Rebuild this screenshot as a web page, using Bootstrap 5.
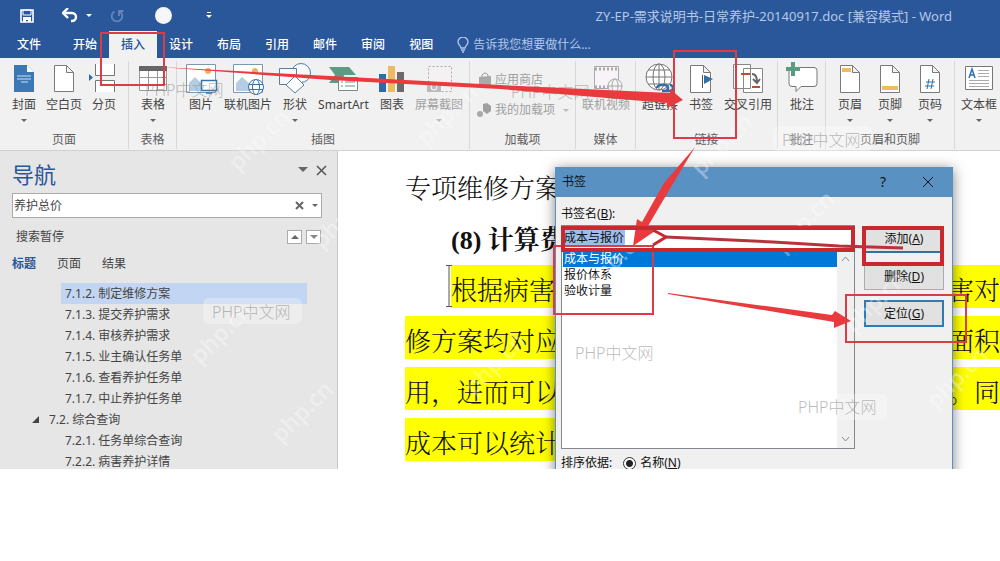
<!DOCTYPE html>
<html lang="zh-CN">
<head>
<meta charset="utf-8">
<meta name="viewport" content="width=device-width, initial-scale=1">
<title>ZY-EP-需求说明书-日常养护-20140917.doc - Word</title>
<link rel="stylesheet" href="https://cdn.jsdelivr.net/npm/bootstrap@5.3.0/dist/css/bootstrap.min.css">
<style>
body{font:12px/18px "Noto Sans","Noto Sans CJK SC",sans-serif;color:#444;background:#fff}
button,input{font:inherit;color:inherit}
button{border:0;background:none;padding:0}
svg{display:block;flex:none}
.app{overflow:hidden}
.titlebar{background:#2a579a;height:31px;padding:0 48px 0 19px;color:#b4c8e8}
.titlebar button{display:flex;justify-content:center;flex:none}
.doc-name{font-size:13px}
.w-save{width:16px}.w-undo{width:40px;margin-left:22px}.w-redo{width:40px}.w-touch{width:52px}.w-more{width:40px}
.tabs{background:#2a579a;height:27px;color:#fff}
.tabs .nav-link{padding:5px 12px 4px;color:#fff;border-radius:0;font-weight:500}
.tabs .nav-link.active{background:#f1f1f1;color:#2a579a}
.tabs .file-tab{padding-left:17px;padding-right:20px}
.tell{color:#b4c8e8;padding-left:12px}
.ribbon{background:#f1f1f1;border-bottom:1px solid #d2d2d2;height:93px;padding-top:3px}
.rgroup{display:flex;flex-direction:column;flex:none;border-right:1px solid #d8d8d8;height:88px}
.rgroup:last-child{border-right:0;flex:1 0 auto}
.items{display:flex;gap:11px;padding:0 6px 0 12px;height:71px}
.near .items{padding-left:6px;padding-right:5px}
.mid .items{padding:0 12px;gap:10px}
.wide .items{gap:16px;padding-right:12px}
.cmd{display:flex;flex-direction:column;align-items:center;white-space:nowrap;color:#444;position:relative}
.cmd svg.ico{width:30px;height:32px;margin:1px -8px 2px;overflow:visible}
.cmd.off,.addin{color:#a0a0a0}
.caret{width:0;height:0;border:3px solid transparent;border-top-color:#666;border-bottom:0;flex:none}
.cmd .caret{margin-top:5px}
.off .caret{border-top-color:#bbb}
.gname{text-align:center;color:#5c5c5c;line-height:18px}
.addin{display:flex;align-items:center;gap:4px;height:30px;white-space:nowrap}
.work{height:318px;position:relative;background:#fff}
.pane{width:338px;flex:none;background:#e6e6e6;border-right:1px solid #c8c8c8;overflow:hidden}
.pane h1{font-size:22px;line-height:28px;color:#2a579a;margin:0;font-weight:400}
.head{padding:9px 10px 5px 12px;height:42px}
.search{margin:0 15px 0 12px;height:25px;border:1px solid #ababab;background:#fff;padding:0 3px 0 1px}
.search input{border:0;background:none;padding:0;outline:0;min-width:0}
.state{height:37px;padding:0 16px}
.state button{width:15px;height:14px;border:1px solid #ababab;background:#fff;display:flex;align-items:center;justify-content:center}
.state button:last-child{margin-right:-7px}
.views{padding:0 12px;height:18px;gap:21px}
.views a{color:#444;text-decoration:none}
.views a.active{color:#2a579a;font-weight:700}
.tree{margin:10px 30px 0 0;padding:0;list-style:none}
.tree li{height:21px;line-height:21px}
.tree a{display:block;color:#444;text-decoration:none;margin-left:61px;padding-left:4px}
.tree a.current{background:#c2d5f2}
.tree a.parent{margin-left:31px;padding-left:0;display:flex;align-items:center;gap:9px}
.page{min-width:0;padding:12px 0 0 67px;font:26px/54px "Liberation Serif","Noto Serif CJK SC","Noto Sans CJK SC",serif;color:#111;font-weight:300;overflow:hidden}
.ln{display:flex;justify-content:space-between;white-space:nowrap;height:43px;margin-bottom:8px}
.ln.ind{margin-left:46px}
.hl{background:#ff0}
.ln.h{font-weight:700}
.fin{margin-right:35%}
.cursor{width:6px;height:42px;position:absolute;left:-5px;top:0}
.clipbox{position:absolute;inset:0;overflow:hidden}
.dlg{position:absolute;left:555px;top:16px;width:398px;height:340px;background:#f0f0f0;box-shadow:0 2px 12px rgba(0,0,0,.5);border:1px solid #5a91c3;border-top:0;color:#111}
.dlg header{background:#5a91c3;height:30px;padding:0 18px 0 6px}
.dlg .cols{padding:8px 8px 0 5px;gap:9px}
.dlg label.cap{display:block;padding-bottom:2px}
.namebox{height:25px;border:1px solid #888;border-radius:0;padding:0 2px 2px;width:100%;background:linear-gradient(#9ebcec,#9ebcec) 2px 2px/61px 17px no-repeat #fff;outline:0}
.listbox{height:199px;border:1px solid #828790;border-top:0;background:#fff}
.listbox ul{list-style:none;margin:0;padding:1px 0 0 1px}
.listbox li{height:16px;line-height:16px;padding-left:1px}
.listbox li.sel{background:#0078d7;color:#fff}
.sbar{width:17px;background:#f0f0f0;padding:6px 4px}
.acts{width:80px;padding-top:21px}
.acts button{height:27px;border:1px solid #adadad;background:#e1e1e1;width:100%;margin-bottom:10px}
.acts button.def{border:2px solid #2f7cb5}
.acts button.first{border:0;border-bottom:2px solid #35709a}
.sort{padding:5px 5px;gap:9px}
.sort input{width:13px;height:13px;margin:0 4px 0 2px;appearance:none;border:1px solid #333;border-radius:50%;background:radial-gradient(#222 0 3px,#fff 4px)}
.marks{position:absolute;left:0;top:0;pointer-events:none}
.wm{font:16px "Noto Sans","Noto Sans CJK SC",sans-serif;font-weight:300;fill:#8c8c8c;fill-opacity:.6}
.wd{font:600 23px "Open Sans",sans-serif;fill:#fff;fill-opacity:.34}
</style>
</head>
<body>
<div class="app position-relative">
<header class="titlebar d-flex align-items-center">
  <button class="w-save" aria-label="保存"><svg width="14" height="14" viewBox="0 0 14 14"><path d="M1 1h12v12H1z" fill="none" stroke="#fff" stroke-width="1.6"/><path d="M3 1h8v5H3z" fill="none" stroke="#fff"/><path d="M3 8h8v5H8v-2H6v2H3z" fill="#fff"/></svg></button>
  <button class="w-undo align-items-center gap-2" aria-label="撤消"><svg width="16" height="15" viewBox="0 0 16 15"><path d="M3 5h7a4 4 0 0 1 0 8H9" fill="none" stroke="#fff" stroke-width="2.4"/><path d="M6 0L1 5l5 5" fill="none" stroke="#fff" stroke-width="2.4"/></svg><i class="caret" style="border-top-color:#fff"></i></button>
  <button class="w-redo" aria-label="恢复"><svg width="14" height="14" viewBox="0 0 14 14"><path d="M4.500 2.500A5.300 5.300 0 1 0 9.500 2.500M9 7V2h4.500" fill="none" stroke="#6486bd" stroke-width="1.800"/></svg></button>
  <button class="w-touch" aria-label="录制"><svg width="17" height="17"><circle cx="8.500" cy="8.500" r="8.500" fill="#f4f6fa"/></svg></button>
  <button class="w-more" aria-label="自定义"><svg width="6" height="7"><path d="M1 .5h4" stroke="#fff"/><path d="M0 3h6L3 6z" fill="#fff"/></svg></button>
  <div class="doc-name ms-auto text-nowrap">ZY-EP-需求说明书-日常养护-20140917.doc [兼容模式] - Word</div>
</header>
<nav class="tabs nav flex-nowrap text-nowrap">
  <a class="nav-link file-tab" href="#">文件</a><a class="nav-link" href="#">开始</a><a class="nav-link active" href="#">插入</a><a class="nav-link" href="#">设计</a><a class="nav-link" href="#">布局</a><a class="nav-link" href="#">引用</a><a class="nav-link" href="#">邮件</a><a class="nav-link" href="#">审阅</a><a class="nav-link" href="#">视图</a>
  <div class="tell d-flex align-items-center gap-1"><svg width="12" height="16" viewBox="0 0 12 16"><path d="M4 11c0-2-3-3-3-6a5 5 0 0 1 10 0c0 3-3 4-3 6zM4 13h4M5 15h2" fill="none" stroke="#b4c8e8" stroke-width="1.300"/></svg>告诉我您想要做什么...</div>
</nav>
<section class="ribbon d-flex">
  <div class="rgroup mid"><div class="items">
    <button class="cmd"><svg class="ico" viewBox="0 0 30 32"><path d="M5 3h13l7 7v20H5z" fill="#3b78b5"/><path d="M18 3v7h7" fill="#fff"/><path d="M8 14h14M8 17h14M12 20h7" stroke="#cfe0f2"/></svg>封面<i class="caret"></i></button>
    <button class="cmd"><svg class="ico" viewBox="0 0 30 32"><path d="M5.500 3.500h12l7 7v19h-19zM17.500 3.500v7h7" fill="#fff" stroke="#7a7a7a"/></svg>空白页</button>
    <button class="cmd"><svg class="ico" viewBox="0 0 30 32"><path d="M6 2v11h20V2M6 30V18h20v12" fill="#fff"/><path d="M6.500 2v11.500h19V2M6.500 30V18.500h19V30" fill="none" stroke="#777"/><path d="M0 12l4 3.500L0 19z" fill="#2f6ea8"/></svg>分页</button>
  </div><div class="gname">页面</div></div>
  <div class="rgroup mid"><div class="items" style="padding-right:11px">
    <button class="cmd"><svg class="ico" viewBox="0 0 30 32"><path d="M1.500 4.500h27v24h-27z" fill="#fff" stroke="#999"/><path d="M1 4h28v5H1z" fill="#666"/><path d="M1 15.500h28M1 22.500h28M10.500 9v20M19.500 9v20" stroke="#999"/></svg>表格<i class="caret"></i></button>
  </div><div class="gname">表格</div></div>
  <div class="rgroup"><div class="items">
    <button class="cmd"><svg class="ico" viewBox="0 0 30 32"><path d="M.5 2.500h29v28H.5z" fill="#fff" stroke="#7f97aa"/><circle cx="22" cy="9" r="3" fill="#eab363"/><path d="M3 29V21l6-6 6 6v8z" fill="#b5cce4"/><path d="M15.500 18.500h15v10h-15zM20 31h6" fill="#fff" stroke="#3475ae" stroke-width="1.500"/></svg>图片</button>
    <button class="cmd"><svg class="ico" viewBox="0 0 30 32"><path d="M.5 2.500h29v28H.5z" fill="#fff" stroke="#7f97aa"/><circle cx="22" cy="9" r="3" fill="#eab363"/><path d="M3 29V21l6-6 8 7v7z" fill="#b5cce4"/><g fill="#fff" stroke="#3475ae"><circle cx="23" cy="25" r="7.500"/><ellipse cx="23" cy="25" rx="3.500" ry="7.500"/><path d="M16 22.500h14M16 27.500h14"/></g></svg>联机图片</button>
    <button class="cmd"><svg class="ico" viewBox="0 0 30 32"><circle cx="21" cy="11" r="9.500" fill="#f6f8fa" stroke="#4980b2"/><path d="M-.5 6.500h17v16h-17z" fill="#f6f8fa" stroke="#5a7e9d"/><path d="M15 14l9 9-9 8-9-8z" fill="#fff" stroke="#5a7e9d"/></svg>形状<i class="caret"></i></button>
    <button class="cmd"><svg class="ico" viewBox="0 0 30 32"><path d="M0 5h20l7 8H15l-2 8H0l6-8z" fill="#5a9c86"/><path d="M9.500 15.500h19v13h-19z" fill="#fff" stroke="#7a8a85"/><path d="M12 20h2m2 0h10M12 24h2m2 0h10" stroke="#7a8a85"/></svg>SmartArt</button>
    <button class="cmd"><svg class="ico" viewBox="0 0 30 32"><path d="M2 12h7v18H2z" fill="#2f6ba8"/><path d="M11 4h7v26h-7z" fill="#edbb62"/><path d="M20 10h7v20h-7z" fill="#6b6b6b"/></svg>图表</button>
    <button class="cmd off"><svg class="ico" viewBox="0 0 30 32"><path d="M4.500 4.500h23v25h-23z" fill="#f5f1f3" stroke="#aaa" stroke-dasharray="2 2"/><path d="M3 20h14v10H3z" fill="#bbb"/><circle cx="10" cy="25" r="3" fill="#bbb" stroke="#fff"/></svg>屏幕截图<i class="caret"></i></button>
  </div><div class="gname">插图</div></div>
  <div class="rgroup"><div class="items flex-column gap-0 pt-1" style="padding:0 6px 0 7px">
    <button class="addin"><svg width="14" height="16" viewBox="0 0 14 16"><path d="M2 5l12-1v11H2z" fill="#a9a9a9"/><path d="M5 6V3q3-4 6 0v2" fill="none" stroke="#999"/></svg>应用商店</button>
    <button class="addin"><svg width="14" height="16" viewBox="0 0 14 16"><path d="M6 2l4-1 4 3v5l-4 3-4-3z" fill="#a0a0a0"/><circle cx="3" cy="12" r="3" fill="#a9a9a9"/></svg>我的加载项<i class="caret ms-1" style="border-top-color:#bbb"></i></button>
  </div><div class="gname">加载项</div></div>
  <div class="rgroup near"><div class="items">
    <button class="cmd off"><svg class="ico" viewBox="0 0 30 32"><path d="M3.500 4.500h24v22h-24z" fill="#f7f3f6" stroke="#aaa"/><path d="M4 7h24M4 25h14" stroke="#aaa" stroke-width="3" stroke-dasharray="2 2"/><g fill="#f4f4f4" stroke="#aaa"><circle cx="24" cy="24" r="7"/><ellipse cx="24" cy="24" rx="3" ry="7"/><path d="M17 24h14"/></g></svg>联机视频</button>
  </div><div class="gname">媒体</div></div>
  <div class="rgroup near"><div class="items">
    <button class="cmd"><svg class="ico" viewBox="0 0 30 32"><g fill="#fff" stroke="#777"><circle cx="14" cy="15" r="13"/><ellipse cx="14" cy="15" rx="6" ry="13"/><path d="M14 2v26M1 15h26M3 8h22M3 22h22" fill="none"/></g><path d="M12 26a4 3 0 0 1 4-3h4a3 3 0 0 1 0 6M17 29h8a3 3 0 0 0 0-6" fill="none" stroke="#2f6ea8" stroke-width="2.500"/></svg>超链接</button>
    <button class="cmd"><svg class="ico" viewBox="0 0 30 32"><path d="M4.500 3.500h13l7 7v20h-20zM17.500 3.500v7h7" fill="#fff" stroke="#7a7a7a"/><path d="M16.500 13v13" stroke="#555"/><path d="M18 13l9 4-9 5z" fill="#2f6ea8"/></svg>书签</button>
    <button class="cmd"><svg class="ico" viewBox="0 0 30 32"><path d="M10.500 6.500h19v24h-19zM.5 2.500h17v24H.5z" fill="#fff" stroke="#888"/><path d="M8 12h9M19 25h8" stroke="#b94f30" stroke-width="2"/><path d="M19 12q5 0 5 8M20 17l4 4 3-4" fill="none" stroke="#666" stroke-width="2"/></svg>交叉引用</button>
  </div><div class="gname">链接</div></div>
  <div class="rgroup mid"><div class="items" style="padding-right:11px">
    <button class="cmd"><svg class="ico" viewBox="0 0 30 32"><path d="M2 5.500h25q3 0 3 3v13q0 3-3 3H14l-5 5v-5H5q-3 0-3-3z" fill="#fff" stroke="#777"/><path d="M6 0v14M-1 7h14" stroke="#5a9c80" stroke-width="4"/></svg>批注</button>
  </div><div class="gname">批注</div></div>
  <div class="rgroup wide"><div class="items">
    <button class="cmd"><svg class="ico" viewBox="0 0 30 32"><path d="M5.500 3.500h12l7 7v20h-19zM17.500 3.500v7h7" fill="#fff" stroke="#7a7a7a"/><path d="M7 6h9v4H7z" fill="#edbb62"/></svg>页眉<i class="caret"></i></button>
    <button class="cmd"><svg class="ico" viewBox="0 0 30 32"><path d="M5.500 3.500h12l7 7v20h-19zM17.500 3.500v7h7" fill="#fff" stroke="#7a7a7a"/><path d="M7 24h16v4H7z" fill="#edbb62"/></svg>页脚<i class="caret"></i></button>
    <button class="cmd"><svg class="ico" viewBox="0 0 30 32"><path d="M5.500 3.500h12l7 7v20h-19zM17.500 3.500v7h7" fill="#fff" stroke="#7a7a7a"/><path d="M14 17l-2 10M18 17l-2 10M11 20h9M10 24h9" stroke="#2f6ea8"/></svg>页码<i class="caret"></i></button>
  </div><div class="gname">页眉和页脚</div></div>
  <div class="rgroup near"><div class="items">
    <button class="cmd"><svg class="ico" viewBox="0 0 30 32"><path d="M1.500 4.500h27v23h-27z" fill="#fff" stroke="#777"/><path d="M5 16l3-9 3 9M6 13h4" fill="none" stroke="#2f6ea8" stroke-width="1.500"/><path d="M14 8.500h11M14 11.500h11M14 14.500h11M5 18.500h20M5 21.500h20M5 24.500h20" stroke="#aaa"/></svg>文本框<i class="caret"></i></button>
  </div></div>
</section>
<main class="work d-flex">
  <aside class="pane">
    <div class="head d-flex justify-content-between"><h1>导航</h1>
      <div class="d-flex align-items-center gap-2 pb-2"><svg width="10" height="6"><path d="M0 0h10L5 5z" fill="#666"/></svg><button aria-label="关闭"><svg width="11" height="11"><path d="M1 1l9 9M10 1l-9 9" stroke="#555" stroke-width="1.500"/></svg></button></div></div>
    <div class="search d-flex align-items-center"><input class="flex-grow-1 ps-0" aria-label="搜索文档" value="养护总价"><svg class="me-2" width="9" height="9"><path d="M1 1l7 7M8 1L1 8" stroke="#666" stroke-width="2"/></svg><i class="caret"></i></div>
    <div class="state d-flex align-items-center"><span class="me-auto">搜索暂停</span><button class="me-1" aria-label="上一个"><svg width="8" height="4"><path d="M0 4h8L4 0z" fill="#666"/></svg></button><button class="me-0" aria-label="下一个"><svg width="8" height="4"><path d="M0 0h8L4 4z" fill="#888"/></svg></button></div>
    <nav class="views d-flex"><a class="active" href="#">标题</a><a href="#">页面</a><a href="#">结果</a></nav>
    <ul class="tree">
      <li><a class="current" href="#">7.1.2. 制定维修方案</a></li>
      <li><a href="#">7.1.3. 提交养护需求</a></li>
      <li><a href="#">7.1.4. 审核养护需求</a></li>
      <li><a href="#">7.1.5. 业主确认任务单</a></li>
      <li><a href="#">7.1.6. 查看养护任务单</a></li>
      <li><a href="#">7.1.7. 中止养护任务单</a></li>
      <li><a class="parent" href="#"><svg width="9" height="8"><path d="M8 0v7H1z" fill="#444"/></svg>7.2. 综合查询</a></li>
      <li><a href="#">7.2.1. 任务单综合查询</a></li>
      <li><a href="#">7.2.2. 病害养护详情</a></li>
    </ul>
  </aside>
  <article class="page flex-grow-1">
    <div class="ln">专项维修方案</div>
    <div class="ln ind h">(8) 计算费</div>
    <div class="ln ind hl position-relative"><svg class="cursor" viewBox="0 0 6 42"><path d="M0 .5h6M3 0v42M0 41.500h6" stroke="#555"/></svg><span>根据病害</span><span>害对</span></div>
    <div class="ln hl"><span>修方案均对应</span><span>面积</span></div>
    <div class="ln hl"><span>用，进而可以</span><span>。同</span></div>
    <div class="ln hl fin">成本可以统计</div>
  </article>
  <div class="clipbox"><section class="dlg" role="dialog" aria-label="书签">
    <header class="d-flex align-items-center"><span class="me-auto">书签</span><button class="me-4 pe-2" style="font-size:14px">?</button><button class="ms-1" aria-label="关闭"><svg width="12" height="12"><path d="M1 1l10 10M11 1L1 11" stroke="#111"/></svg></button></header>
    <div class="cols d-flex">
      <div class="flex-grow-1">
        <label class="cap" for="bm">书签名(<u>B</u>):</label>
        <input class="namebox" id="bm" value="成本与报价">
        <div class="listbox d-flex">
          <ul class="flex-grow-1" role="listbox"><li class="sel" role="option">成本与报价</li><li role="option">报价体系</li><li role="option">验收计量</li></ul>
          <div class="sbar d-flex flex-column justify-content-between"><svg width="9" height="6"><path d="M1 5l3.500-4L8 5" fill="none" stroke="#888"/></svg><svg width="9" height="6"><path d="M1 1l3.500 4L8 1" fill="none" stroke="#888"/></svg></div>
        </div>
      </div>
      <div class="acts"><button class="first">添加(<u>A</u>)</button><button>删除(<u>D</u>)</button><button class="def">定位(<u>G</u>)</button></div>
    </div>
    <div class="sort d-flex align-items-center"><span>排序依据:</span><label class="d-flex align-items-center"><input type="radio" name="s" checked>名称(<u>N</u>)</label></div>
  </section></div>
</main>
<svg class="marks" width="1000" height="469" viewBox="0 0 1000 469">
  <g fill="#fff" fill-opacity=".28"><rect x="203" y="298" width="99" height="26" rx="6"/><rect x="788" y="394" width="99" height="26" rx="6"/><rect x="773" y="126" width="99" height="26" rx="6"/></g>
  <g class="wm"><text x="145" y="96">PHP中文网</text><text x="511" y="98">PHP中文网</text><text x="782" y="146">PHP中文网</text><text x="212" y="318">PHP中文网</text><text x="575" y="359">PHP中文网</text><text x="798" y="413">PHP中文网</text></g>
  <g class="wd">
    <text transform="translate(238 172) rotate(-45)">php.cn</text><text transform="translate(426 147) rotate(-45)">php.cn</text>
    <text transform="translate(701 177) rotate(-45)">php.cn</text><text transform="translate(783 254) rotate(-45)">php.cn</text>
    <text transform="translate(200 365) rotate(-45)">php.cn</text><text transform="translate(281 444) rotate(-45)">php.cn</text>
    <text transform="translate(322 250) rotate(-45)">php.cn</text><text transform="translate(474 396) rotate(-45)">php.cn</text>
    <text transform="translate(594 292) rotate(-45)">php.cn</text><text transform="translate(854 334) rotate(-45)">php.cn</text>
    <text transform="translate(936 410) rotate(-45)">php.cn</text>
  </g>
  <g fill="#e93a3e"><path d="M160 67L330 76l170 9 170 8V89l13 11-16 8v-5L500 89 330 80z"/><path d="M695 147L671 187 648 226l7 5-22 15 4-27 5 3 22-39z"/><path d="M668 293l164 22 3-4 16 10-17 7v-6L668 294z"/></g>
  <g fill="none" stroke="#dc3c44" stroke-width="2"><path d="M101 33h63v52h-63zM674 51h62v87h-62zM554 246h99v68h-99zM846 295h120v47H846z"/></g>
  <g fill="none" stroke="#c9282f" stroke-width="4"><path d="M563 228h290v22H563zM864 228h78v36h-78z"/><path d="M653 230l13 7-13 8" stroke-width="3"/><path d="M666 237l107 5 66 4 64 2" stroke="#b8323c" stroke-width="3"/></g>
</svg>
</div>
<script src="https://cdn.jsdelivr.net/npm/bootstrap@5.3.0/dist/js/bootstrap.bundle.min.js"></script>
</body>
</html>
